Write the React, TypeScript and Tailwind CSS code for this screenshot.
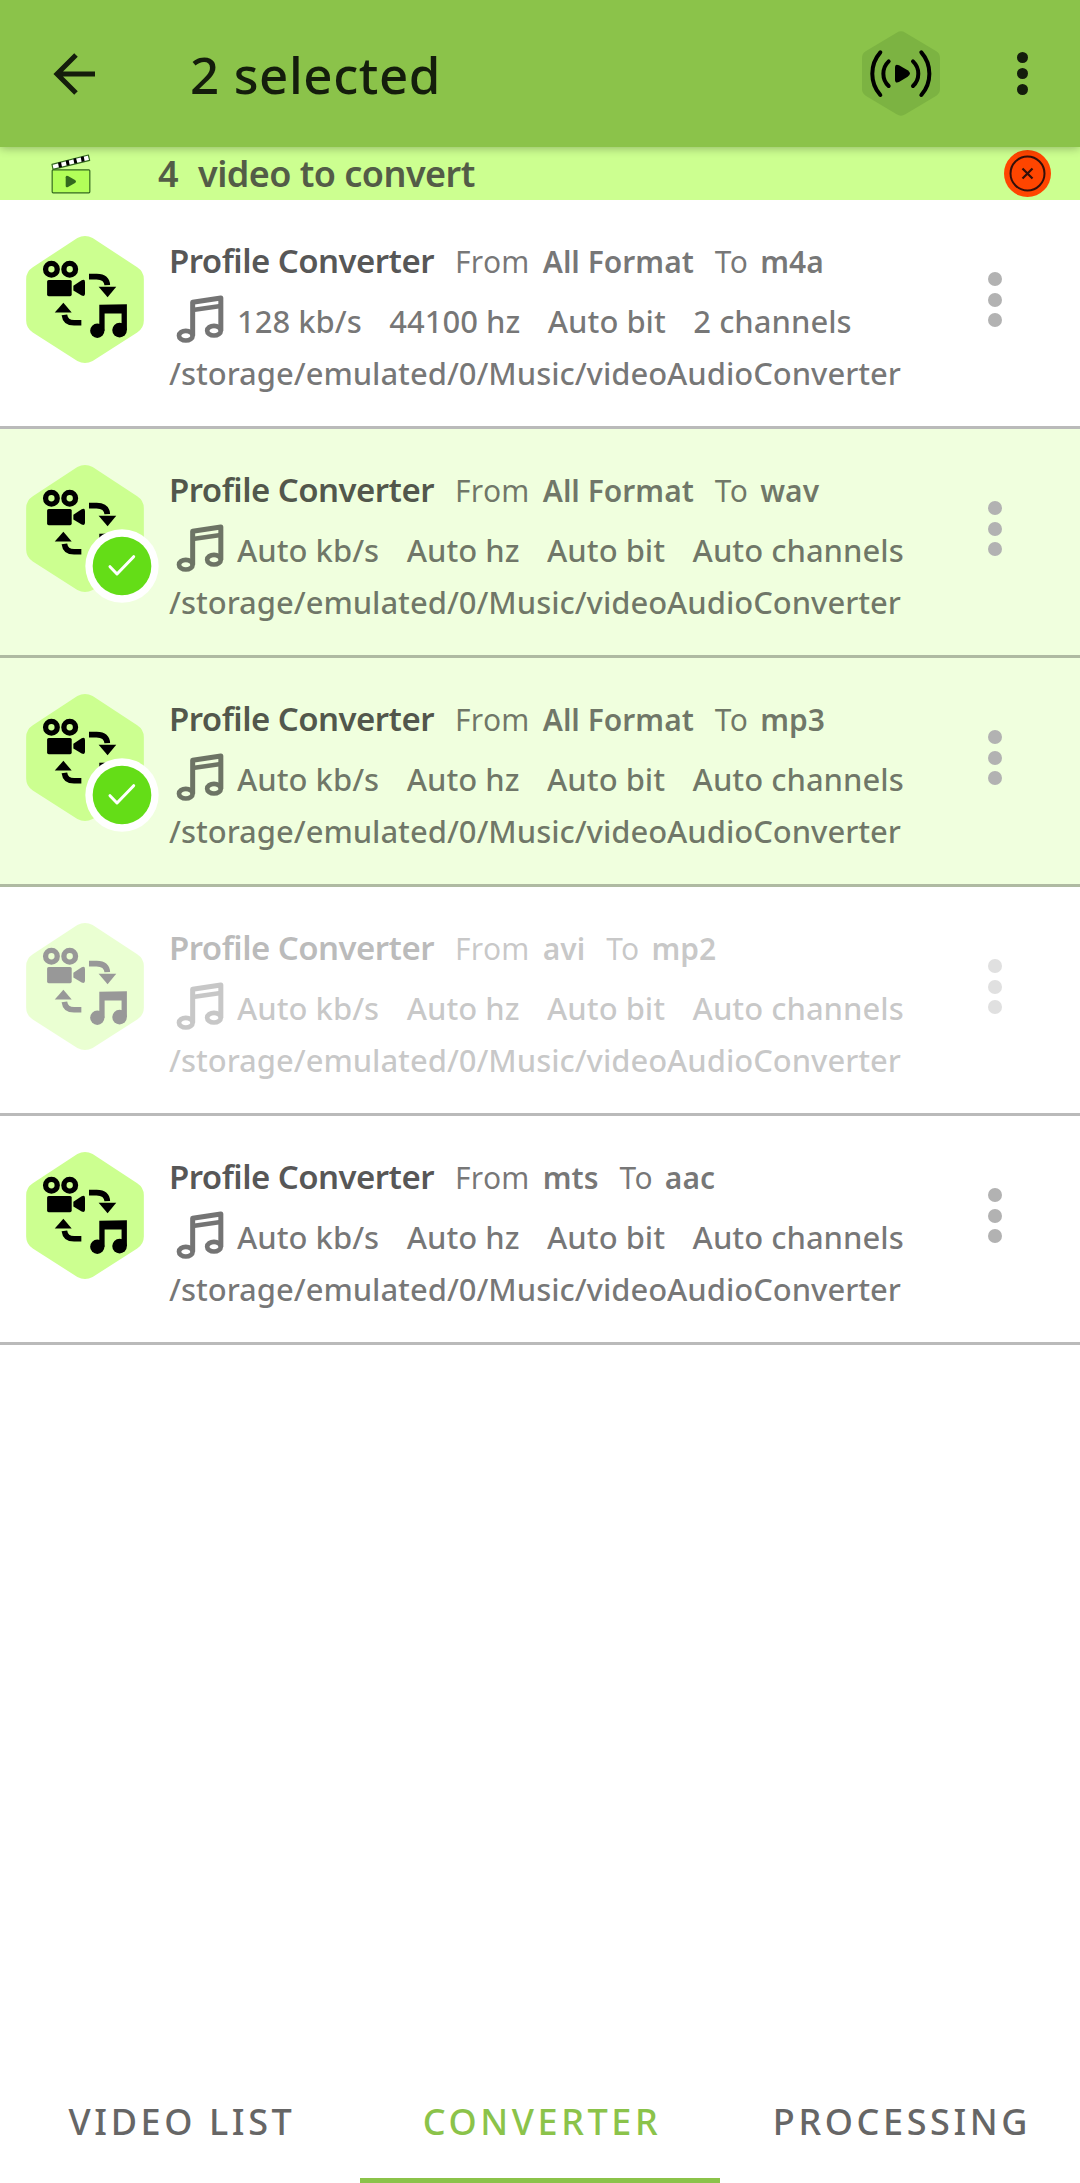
import { clsx } from 'clsx'
import React from 'react'

type Profile = {
    from: string
    to: string
    specs: string[]
    path: string
    selected?: boolean
    disabled?: boolean
}

const OUTPUT_PATH = '/storage/emulated/0/Music/videoAudioConverter'
const AUTO_SPECS = ['Auto kb/s', 'Auto hz', 'Auto bit', 'Auto channels']

const PROFILES: Profile[] = [
    {
        from: 'All Format',
        to: 'm4a',
        specs: ['128 kb/s', '44100 hz', 'Auto bit', '2 channels'],
        path: OUTPUT_PATH,
    },
    { from: 'All Format', to: 'wav', specs: AUTO_SPECS, path: OUTPUT_PATH, selected: true },
    { from: 'All Format', to: 'mp3', specs: AUTO_SPECS, path: OUTPUT_PATH, selected: true },
    { from: 'avi', to: 'mp2', specs: AUTO_SPECS, path: OUTPUT_PATH, disabled: true },
    { from: 'mts', to: 'aac', specs: AUTO_SPECS, path: OUTPUT_PATH },
]

const TABS = ['VIDEO LIST', 'CONVERTER', 'PROCESSING'] as const

const BackIcon = () => (
    <svg className="h-[42px] w-[42px]" viewBox="0 0 42 42" fill="none" stroke="#141d0c" strokeWidth="5">
        <path d="M42 21H4M23 2 4 21l19 19" />
    </svg>
)

const BroadcastIcon = () => (
    <svg className="h-[85px] w-[78px]" viewBox="37 16 234 255" fill="none">
        <path
            fill="#7cb342"
            d="M141 21Q154 13 167 21L260 77Q271 84 271 97V190Q271 203 260 210L167 266Q154 274 141 266L48 210Q37 203 37 190V97Q37 84 48 77Z"
        />
        <g stroke="#000" strokeWidth="12" strokeLinecap="round">
            <path d="M92 80A97 97 0 0 0 92 208M117 107A51 51 0 0 0 117 181" />
            <path d="M215 80A97 97 0 0 1 215 208M190 107A51 51 0 0 1 190 181" />
        </g>
        <path
            fill="#000"
            d="M136 126Q136 113 148 119L174 134Q188 144 174 153L148 169Q136 174 136 162Z"
        />
    </svg>
)

const ClapperIcon = () => (
    <svg className="h-10 w-10" viewBox="62 40 120 120" fill="none">
        <rect x="65.500" y="87.500" width="113" height="69" rx="3" fill="#b2ff59" stroke="#33691e" strokeWidth="3.500" />
        <path fill="#33691e" d="M106 110Q106 103 113 106L134 118Q140 122 134 127L113 139Q106 142 106 135Z" />
        <path fill="#fff" stroke="#33691e" strokeWidth="3.500" strokeLinejoin="round" d="M65 71 174 43 178 59 68 86Z" />
        <path
            fill="#000"
            d="M83 66 92 64 95 79 86 81ZM106 60 115 58 118 73 109 75ZM129 54 137 52 141 67 132 69ZM151 49 160 47 163 62 154 64Z"
        />
    </svg>
)

const CloseIcon = () => (
    <svg className="h-[47px] w-[47px]" viewBox="0 0 47 47" fill="none">
        <circle cx="23.500" cy="23.500" r="23.500" fill="#ff4500" />
        <circle cx="23.500" cy="23.500" r="17" stroke="#33100a" strokeWidth="2" />
        <path d="m18.500 18.500 10 10m0-10-10 10" stroke="#33100a" strokeWidth="2.200" />
    </svg>
)

const ConvertIcon = () => (
    <svg className="h-[127px] w-[118px]" viewBox="78 78 354 382" fill="none">
        <path
            fill="#ccff90"
            d="M232 84Q255 72 278 84L412 172Q432 185 432 208V332Q432 355 412 368L278 454Q255 466 232 454L98 368Q78 355 78 332V208Q78 185 98 172Z"
        />
        <circle cx="154" cy="178" r="17.500" stroke="#000" strokeWidth="16" />
        <circle cx="209" cy="178" r="17.500" stroke="#000" strokeWidth="16" />
        <rect x="141" y="210" width="74" height="49" rx="5" fill="#000" />
        <path fill="#000" d="M220 228 245 211Q255 207 255 216V252Q255 261 245 257L220 242Z" />
        <path stroke="#000" strokeWidth="17" d="M267 200H290Q321 201 322 226" />
        <path fill="#000" d="M296 231H349L323 262Z" />
        <path stroke="#000" strokeWidth="17" d="M193 315Q196 339 222 339H244" />
        <path fill="#000" d="M164 308H215L190 279Z" />
        <path fill="#000" d="M298 285 381 283V361H365V311H314V363H298Z" />
        <circle cx="292" cy="363" r="21.500" fill="#000" />
        <circle cx="359" cy="361" r="22" fill="#000" />
    </svg>
)

const NoteIcon = () => (
    <svg className="h-[49px] w-12 opacity-54" viewBox="530 256 144 147" fill="none" stroke="#000" strokeLinejoin="round">
        <path strokeWidth="15" d="M580 378V278L664.500 265V363" />
        <path strokeWidth="13" d="M580 301 664 289" />
        <ellipse cx="559.500" cy="378" rx="20.500" ry="14.500" strokeWidth="14" />
        <ellipse cx="644" cy="363" rx="20.500" ry="14.500" strokeWidth="14" />
    </svg>
)

const CheckBadge = () => (
    <svg className="absolute top-16 left-[59px] h-[74px] w-[74px]" viewBox="0 0 222 222" fill="none">
        <circle cx="111" cy="111" r="110" fill="#fff" />
        <circle cx="111" cy="111" r="88" fill="#64dd17" />
        <path d="m75 113 21 22 50-52" stroke="#fff" strokeWidth="9" strokeLinecap="round" strokeLinejoin="round" />
    </svg>
)

const ProfileRow = ({ from, to, specs, path, selected, disabled }: Profile) => (
    <li className={clsx('h-[229px] border-b-3 border-black/27', selected && 'bg-[#f0ffde]')}>
        <div className={clsx('flex', disabled && 'opacity-40')}>
            <div className="relative mt-9 ml-[26px] shrink-0">
                <ConvertIcon />
                {selected && <CheckBadge />}
            </div>

            <div className="ml-[25px] pt-[39px] whitespace-nowrap text-black/54">
                <div className="flex h-11 items-baseline text-[30px] leading-[44px]">
                    <h2 className="text-[33px] font-semibold tracking-[-0.55px] text-black/67">
                        Profile Converter
                    </h2>
                    <span className="ml-[21px] tracking-[0.3px]">From</span>
                    <b className="ml-[13px] font-semibold">{from}</b>
                    <span className="ml-[21px] tracking-[0.3px]">To</span>
                    <b className="ml-[12px] font-semibold">{to}</b>
                </div>
                <div className="mt-[10px] flex h-[57px] items-center text-[31px] font-medium">
                    <div className="mr-[13px] mb-1 ml-[7px]">
                        <NoteIcon />
                    </div>
                    <div className="flex gap-[27.500px]">
                        {specs.map((spec) => (
                            <span key={spec}>{spec}</span>
                        ))}
                    </div>
                </div>
                <p className="text-[31px] leading-[47px] font-medium tracking-[-0.04px]">{path}</p>
            </div>

            <button
                aria-label="More"
                className="mt-[72px] mr-[78px] ml-auto flex flex-col gap-[6.5px] self-start"
                type="button"
            >
                {[0, 1, 2].map((dot) => (
                    <span key={dot} className="size-[14px] rounded-full bg-[#b2b2b2]" />
                ))}
            </button>
        </div>
    </li>
)

export default function App() {
    const [activeTab, setActiveTab] = React.useState<string>('CONVERTER')

    return (
        <div className="flex h-[2183px] w-[1080px] flex-col bg-white font-['Noto_Sans',sans-serif]">
            <header className="relative z-10 flex h-[147px] shrink-0 items-center bg-[#8bc34a] pr-[52px] pl-[53px] shadow-[0_1px_9px_rgba(0,0,0,0.3)]">
                <button aria-label="Back" type="button">
                    <BackIcon />
                </button>
                <h1 className="ml-[95px] pt-[2px] text-[51px] leading-none font-medium tracking-[0.6px] text-[#141d0c]">
                    2 selected
                </h1>
                <div className="ml-auto">
                    <BroadcastIcon />
                </div>
                <button aria-label="Menu" className="ml-[77px] flex flex-col gap-[5px]" type="button">
                    {[0, 1, 2].map((dot) => (
                        <span key={dot} className="size-[11px] rounded-full bg-[#141d0c]" />
                    ))}
                </button>
            </header>

            <div className="flex h-[53px] shrink-0 items-center bg-[#ccff90] pr-[29px] pl-[51px]">
                <ClapperIcon />
                <p className="ml-[67px] flex gap-5 text-[36px] leading-none font-semibold tracking-[-0.55px] text-[#535c47]">
                    <span>4</span>
                    <span>video to convert</span>
                </p>
                <button aria-label="Clear" className="ml-auto" type="button">
                    <CloseIcon />
                </button>
            </div>

            <ul>
                {PROFILES.map((profile) => (
                    <ProfileRow key={profile.to} {...profile} />
                ))}
            </ul>

            <nav className="mt-auto grid h-[124px] grid-cols-3">
                {TABS.map((tab) => (
                    <button
                        key={tab}
                        className={clsx(
                            'border-b-5 pt-[7px] pl-1 text-[36px] font-medium tracking-[3.6px]',
                            tab === activeTab
                                ? 'border-[#8bc34a] text-[#8bc34a]'
                                : 'border-transparent text-[#666]'
                        )}
                        onClick={() => setActiveTab(tab)}
                        type="button"
                    >
                        {tab}
                    </button>
                ))}
            </nav>
        </div>
    )
}
